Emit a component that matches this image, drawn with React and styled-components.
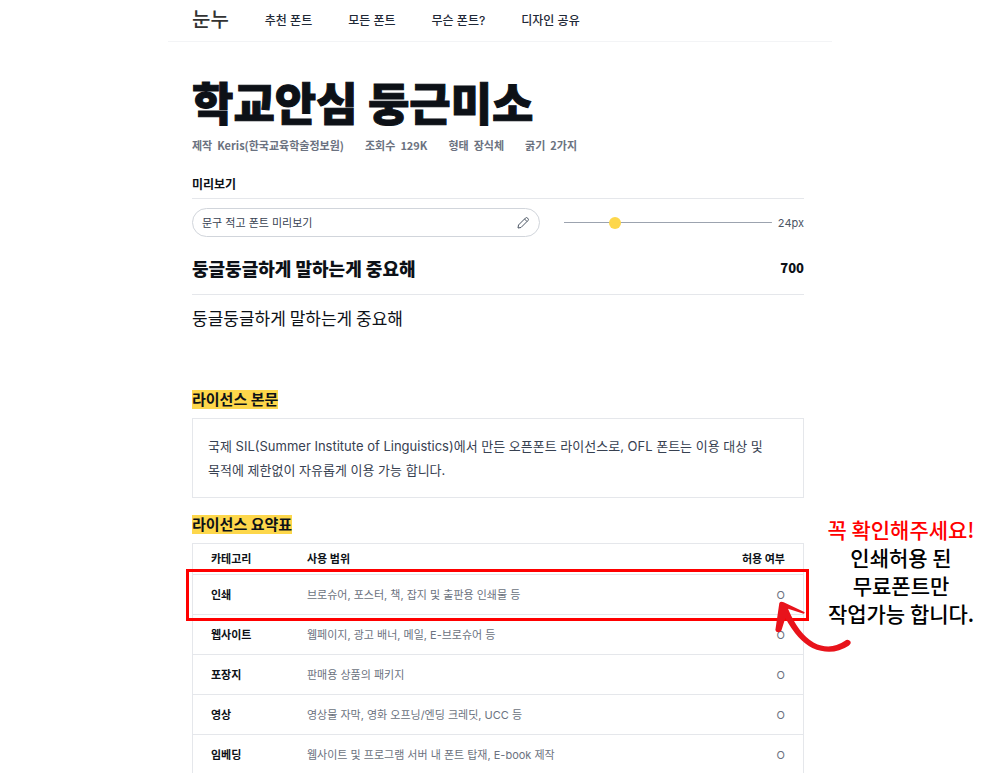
import { useState } from "react";
import styled, { createGlobalStyle } from "styled-components";

const GlobalStyle = createGlobalStyle`
  * {
    box-sizing: border-box;
  }
  body {
    margin: 0;
    background: #fff;
    color: #0d1117;
    font-family: Inter, "Noto Sans CJK KR", sans-serif;
    font-size: 11px;
    line-height: 16px;
  }
`;

const Page = styled.div`
  max-width: 664px;
  margin: 0 auto;
`;

const Header = styled.header`
  display: flex;
  align-items: center;
  gap: 36px;
  height: 42px;
  padding: 0 24px;
  border-bottom: 1px solid #f3f4f6;
`;

const Logo = styled.a`
  padding-bottom: 4px;
  color: #333;
  font-family: "Noto Sans CJK KR", sans-serif;
  font-size: 20px;
  font-weight: 500;
  line-height: 24px;
  text-decoration: none;
`;

const Nav = styled.nav`
  display: flex;
  gap: 36px;
`;

const NavLink = styled.a`
  color: #1f2937;
  font-size: 12px;
  font-weight: 500;
  text-decoration: none;
`;

const Main = styled.main`
  padding: 30px 28px 0 24px;
`;

const Title = styled.h1`
  margin: 0;
  font-family: "Noto Sans CJK KR", sans-serif;
  font-size: 45px;
  font-weight: 900;
  line-height: 60px;
  -webkit-text-stroke: 1px #0d1117;
`;

const Meta = styled.ul`
  display: flex;
  gap: 21px;
  margin: 5px 0 0;
  padding: 0;
  list-style: none;
  color: #6b7280;
  font-family: "Noto Sans CJK KR", sans-serif;
  font-weight: 700;
`;

const MetaItem = styled.li`
  display: flex;
  gap: 5px;
`;

const PreviewTitle = styled.h2`
  margin: 24px 0 9px;
  padding-bottom: 5px;
  border-bottom: 1px solid #e5e7eb;
  font-size: 12px;
  font-weight: 700;
`;

const Controls = styled.div`
  display: grid;
  grid-template-columns: 29fr 20fr;
  align-items: center;
  gap: 24px;
`;

const TextField = styled.label`
  display: flex;
  align-items: center;
  height: 29px;
  padding: 0 9px;
  border: 1px solid #d1d5db;
  border-radius: 15px;
  color: #4b5563;
`;

const TextInput = styled.input`
  flex: 1;
  min-width: 0;
  padding: 0;
  border: 0;
  outline: 0;
  background: none;
  color: #374151;
  font: inherit;

  &::placeholder {
    color: #374151;
    opacity: 1;
  }
`;

const SizeField = styled.label`
  display: flex;
  align-items: center;
  gap: 6px;
  color: #4b5563;
`;

const Slider = styled.input`
  flex: 1;
  min-width: 0;
  height: 12px;
  margin: 0;
  appearance: none;
  background: linear-gradient(#9ca3af, #9ca3af) center / 100% 1px no-repeat;

  &::-webkit-slider-thumb {
    appearance: none;
    width: 12px;
    height: 12px;
    border-radius: 50%;
    background: #fdd74b;
  }
`;

const Sample = styled.div`
  display: flex;
  align-items: center;
  justify-content: space-between;
  height: ${(props) => (props.$bold ? "58px" : "46px")};
  padding-top: ${(props) => (props.$bold ? "5px" : "0")};
  border-bottom: ${(props) => (props.$bold ? "1px solid #e5e7eb" : "0")};
  font-family: "Noto Sans CJK KR", sans-serif;
  font-size: ${(props) => (props.$bold ? "18px" : "17px")};
  font-weight: ${(props) => (props.$bold ? 900 : 400)};
  line-height: 24px;
`;

const Weight = styled.span`
  font-size: 13px;
`;

const License = styled.section`
  margin-top: 49px;
`;

const SectionTitle = styled.h2`
  width: fit-content;
  margin: 0 0 9px;
  background: #fdd74b;
  font-size: 15px;
  font-weight: 700;
  line-height: 19px;
`;

const LicenseText = styled.p`
  margin: 0 0 17px;
  padding: 15px;
  border: 1px solid #e5e7eb;
  color: #374151;
  font-size: 13px;
  line-height: 24px;
  word-break: keep-all;
`;

const TableArea = styled.div`
  position: relative;
`;

const Table = styled.table`
  width: 100%;
  border: 1px solid #e5e7eb;
  border-collapse: separate;
  border-spacing: 0;
  table-layout: fixed;
`;

const HeadCell = styled.th`
  width: ${(props) => props.$width || "auto"};
  height: 31px;
  padding: 0 18px;
  border-bottom: 1px solid #e5e7eb;
  text-align: ${(props) => props.$align || "left"};
  font-weight: 700;
`;

const NameCell = styled.th`
  height: 40px;
  padding: 0 18px;
  border-bottom: 1px solid #e5e7eb;
  text-align: left;
  font-weight: 700;
`;

const Cell = styled.td`
  height: 40px;
  padding: 0 18px;
  border-bottom: 1px solid #e5e7eb;
  color: #6b7280;
  text-align: ${(props) => props.$align || "left"};
`;

const Highlight = styled.div`
  position: absolute;
  top: 26px;
  left: -6px;
  right: -5px;
  height: 52px;
  border: 3px solid #f00;
  pointer-events: none;
`;

const Arrow = styled.svg`
  position: absolute;
  top: 54px;
  right: -49px;
  width: 80px;
  height: 60px;
  pointer-events: none;
`;

const Note = styled.p`
  position: absolute;
  top: -28px;
  left: 100%;
  width: 194px;
  margin: 0;
  color: #000;
  font-family: "Noto Sans CJK KR", sans-serif;
  font-size: 21px;
  font-weight: 500;
  line-height: 28px;
  text-align: center;
`;

const NoteLine = styled.span`
  display: block;
  color: ${(props) => (props.$red ? "#f00" : "inherit")};
`;

const links = ["추천 폰트", "모든 폰트", "무슨 폰트?", "디자인 공유"];

const meta = [
  ["제작", "Keris(한국교육학술정보원)"],
  ["조회수", "129K"],
  ["형태", "장식체"],
  ["굵기", "2가지"],
];

const usages = [
  ["인쇄", "브로슈어, 포스터, 책, 잡지 및 출판용 인쇄물 등"],
  ["웹사이트", "웹페이지, 광고 배너, 메일, E-브로슈어 등"],
  ["포장지", "판매용 상품의 패키지"],
  ["영상", "영상물 자막, 영화 오프닝/엔딩 크레딧, UCC 등"],
  ["임베딩", "웹사이트 및 프로그램 서버 내 폰트 탑재, E-book 제작"],
];

const PencilIcon = () => (
  <svg width="14" height="14" viewBox="0 0 14 14" fill="none" stroke="currentColor" aria-hidden="true">
    <path d="M2 12 2.5 9 9.5 2Q10.5 1 11.7 2.2Q13 3.5 12 4.5L5 11.5ZM8.5 3 11 5.5" />
  </svg>
);

export default function App() {
  const [text, setText] = useState("");
  const [size, setSize] = useState(24);
  const sample = text || "둥글둥글하게 말하는게 중요해";

  return (
    <>
      <GlobalStyle />
      <Page>
        <Header>
          <Logo href="#">눈누</Logo>
          <Nav>
            {links.map((link) => (
              <NavLink href="#" key={link}>
                {link}
              </NavLink>
            ))}
          </Nav>
        </Header>

        <Main>
          <Title>학교안심 둥근미소</Title>
          <Meta>
            {meta.map(([name, value]) => (
              <MetaItem key={name}>
                <span>{name}</span>
                <span>{value}</span>
              </MetaItem>
            ))}
          </Meta>

          <PreviewTitle>미리보기</PreviewTitle>
          <Controls>
            <TextField>
              <TextInput
                aria-label="미리보기 문구"
                placeholder="문구 적고 폰트 미리보기"
                value={text}
                onChange={(e) => setText(e.target.value)}
              />
              <PencilIcon />
            </TextField>
            <SizeField>
              <Slider
                type="range"
                aria-label="글자 크기"
                min="6"
                max="85"
                value={size}
                onChange={(e) => setSize(e.target.value)}
              />
              <span>{size}px</span>
            </SizeField>
          </Controls>
          <Sample $bold>
            <span>{sample}</span>
            <Weight>700</Weight>
          </Sample>
          <Sample>{sample}</Sample>

          <License>
            <SectionTitle>라이선스 본문</SectionTitle>
            <LicenseText>
              국제 SIL(Summer Institute of Linguistics)에서 만든 오픈폰트
              라이선스로, OFL 폰트는 이용 대상 및 목적에 제한없이 자유롭게 이용
              가능 합니다.
            </LicenseText>

            <SectionTitle>라이선스 요약표</SectionTitle>
            <TableArea>
              <Table>
                <thead>
                  <tr>
                    <HeadCell $width="96px">카테고리</HeadCell>
                    <HeadCell>사용 범위</HeadCell>
                    <HeadCell $width="96px" $align="right">
                      허용 여부
                    </HeadCell>
                  </tr>
                </thead>
                <tbody>
                  {usages.map(([name, scope]) => (
                    <tr key={name}>
                      <NameCell scope="row">{name}</NameCell>
                      <Cell>{scope}</Cell>
                      <Cell $align="right">O</Cell>
                    </tr>
                  ))}
                </tbody>
              </Table>
              <Highlight />
              <Arrow viewBox="129 291 240 180" aria-hidden="true">
                <path
                  d="M148 309Q152 303 161 307L223 336Q226 340 221 341L174 326Q206 402 252 428Q300 453 344 423Q354 415 361 424Q365 431 356 437Q306 470 247 444Q202 421 166 354L154 392Q149 399 139 395Q134 392 137 384Z"
                  fill="#e8131b"
                />
              </Arrow>
              <Note>
                <NoteLine $red>꼭 확인해주세요!</NoteLine>
                <NoteLine>인쇄허용 된</NoteLine>
                <NoteLine>무료폰트만</NoteLine>
                <NoteLine>작업가능 합니다.</NoteLine>
              </Note>
            </TableArea>
          </License>
        </Main>
      </Page>
    </>
  );
}
